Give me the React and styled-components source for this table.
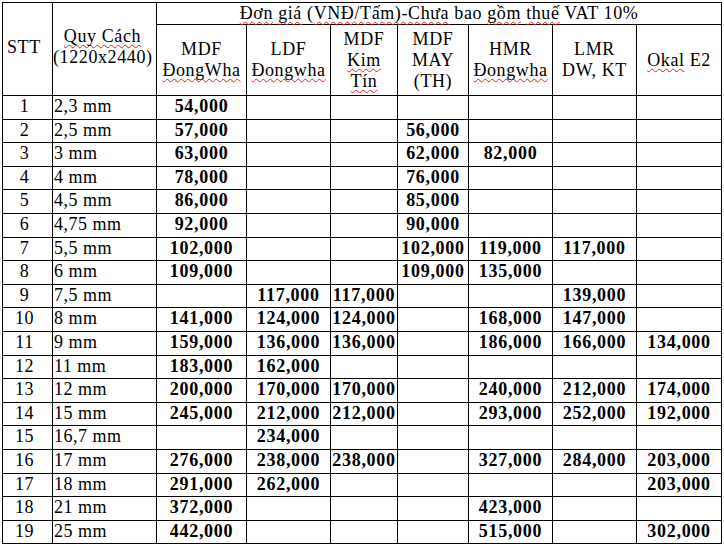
import React from 'react'
import styled, { createGlobalStyle } from 'styled-components'

//STYLING
const GlobalStyle = createGlobalStyle`
  html, body {
    margin: 0;
    padding: 0;
    background: #ffffff;
  }
  body {
    padding: 2px 0 0 2px;
    font-family: "Liberation Serif", "Times New Roman", serif;
    color: #000;
  }
`
const PriceTable = styled.table`
  border-collapse: collapse;
  table-layout: fixed;
  width: 720px;
  font-size: 18px;
  letter-spacing: 0.6px;
`
const HeadCell = styled.th`
  border: 1px solid #000;
  font-weight: normal;
  vertical-align: middle;
  text-align: ${props => props.$align || 'center'};
  line-height: 21px;
  padding: ${props => props.$pad || '0 1px'};
  height: ${props => props.$h || 'auto'};
  white-space: nowrap;
`
const Row = styled.tr`
  height: 23.6px;
`
const Cell = styled.td`
  border: 1px solid #000;
  vertical-align: top;
  line-height: 20px;
  padding: ${props => props.$pad || '0 1px'};
  text-align: ${props => props.$align || 'center'};
  font-weight: ${props => props.$bold ? 'bold' : 'normal'};
  letter-spacing: ${props => props.$bold ? '0.7px' : '0.5px'};
  white-space: nowrap;
  overflow: hidden;
`
const Wavy = styled.span`
  text-decoration: underline wavy #e02020;
  text-decoration-thickness: 1px;
  text-underline-offset: 2px;
  text-decoration-skip-ink: none;
`

const colWidths = [50, 104, 90, 84, 67, 71, 84, 84, 85]

const rows = [
  [1, '2,3 mm', '54,000', '', '', '', '', '', ''],
  [2, '2,5 mm', '57,000', '', '', '56,000', '', '', ''],
  [3, '3 mm', '63,000', '', '', '62,000', '82,000', '', ''],
  [4, '4 mm', '78,000', '', '', '76,000', '', '', ''],
  [5, '4,5 mm', '86,000', '', '', '85,000', '', '', ''],
  [6, '4,75 mm', '92,000', '', '', '90,000', '', '', ''],
  [7, '5,5 mm', '102,000', '', '', '102,000', '119,000', '117,000', ''],
  [8, '6 mm', '109,000', '', '', '109,000', '135,000', '', ''],
  [9, '7,5 mm', '', '117,000', '117,000', '', '', '139,000', ''],
  [10, '8 mm', '141,000', '124,000', '124,000', '', '168,000', '147,000', ''],
  [11, '9 mm', '159,000', '136,000', '136,000', '', '186,000', '166,000', '134,000'],
  [12, '11 mm', '183,000', '162,000', '', '', '', '', ''],
  [13, '12 mm', '200,000', '170,000', '170,000', '', '240,000', '212,000', '174,000'],
  [14, '15 mm', '245,000', '212,000', '212,000', '', '293,000', '252,000', '192,000'],
  [15, '16,7 mm', '', '234,000', '', '', '', '', ''],
  [16, '17 mm', '276,000', '238,000', '238,000', '', '327,000', '284,000', '203,000'],
  [17, '18 mm', '291,000', '262,000', '', '', '', '', '203,000'],
  [18, '21 mm', '372,000', '', '', '', '423,000', '', ''],
  [19, '25 mm', '442,000', '', '', '', '515,000', '', '302,000'],
]

const App = () => {
  const bodyRows = rows.map(r =>
    <Row key={r[0]}>
      <Cell $pad="0 6px 0 0">{r[0]}</Cell>
      <Cell $align="left" $pad="0 0 0 1px">{r[1]}</Cell>
      {r.slice(2).map((v, i) => <Cell key={i} $bold>{v}</Cell>)}
    </Row>
  )

  return <>
    <GlobalStyle />
    <PriceTable>
      <colgroup>
        {colWidths.map((w, i) => <col key={i} style={{ width: w }} />)}
      </colgroup>
      <thead>
        <tr>
          <HeadCell rowSpan={2} $align="left" $pad="0 0 4px 4px">STT</HeadCell>
          <HeadCell rowSpan={2} $pad="0 4px 4px 0"><Wavy>Quy Cách</Wavy><br />(1220x2440)</HeadCell>
          <HeadCell colSpan={7} $h="21px">
            <Wavy>Đơn</Wavy> <Wavy>giá</Wavy> (<Wavy>VNĐ/Tấm)-Chưa</Wavy> bao <Wavy>gồm</Wavy> <Wavy>thuế</Wavy> VAT 10%
          </HeadCell>
        </tr>
        <tr>
          <HeadCell $h="70px">MDF<br /><Wavy>ĐongWha</Wavy></HeadCell>
          <HeadCell>LDF<br /><Wavy>Đongwha</Wavy></HeadCell>
          <HeadCell>MDF<br /><Wavy>Kim</Wavy><br /><Wavy>Tín</Wavy></HeadCell>
          <HeadCell>MDF<br />MAY<br />(TH)</HeadCell>
          <HeadCell>HMR<br /><Wavy>Đongwha</Wavy></HeadCell>
          <HeadCell>LMR<br />DW, KT</HeadCell>
          <HeadCell><Wavy>Okal</Wavy> E2</HeadCell>
        </tr>
      </thead>
      <tbody>{bodyRows}</tbody>
    </PriceTable>
  </>
}

export default App
